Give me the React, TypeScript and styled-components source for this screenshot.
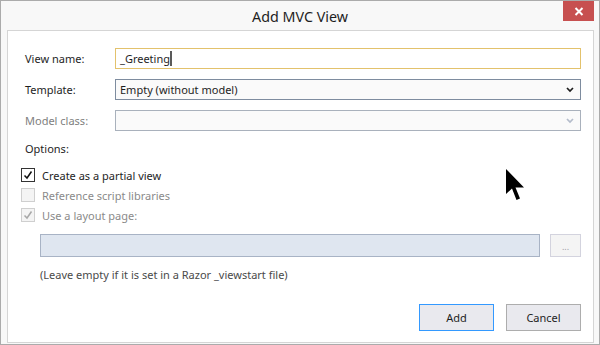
import React from "react";
import styled, { createGlobalStyle } from "styled-components";

const Global = createGlobalStyle`
  html, body { margin: 0; padding: 0; background: #ffffff; }
  * { box-sizing: border-box; }
`;

const FONT = `"Noto Sans", "Open Sans", sans-serif`;

const Window = styled.div`
  width: 600px;
  height: 345px;
  border: 1px solid #ababab;
  background: #f8f8f8;
  display: flex;
  flex-direction: column;
  font-family: ${FONT};
  font-size: 11px;
  color: #1e1e1e;
`;

const TitleBar = styled.div`
  height: 29px;
  display: grid;
  grid-template-columns: 1fr auto 1fr;
  align-items: center;
`;

const Title = styled.div`
  grid-column: 2;
  font-size: 14.3px;
  color: #1e1e1e;
  padding-top: 1px;
`;

const CloseButton = styled.div`
  grid-column: 3;
  justify-self: end;
  align-self: start;
  width: 31px;
  height: 20px;
  margin-right: 5px;
  background: #c75050;
  display: flex;
  align-items: center;
  justify-content: center;
`;

const Panel = styled.div`
  position: relative;
  flex: 1;
  margin: 0 5px 1px 6px;
  border: 1px solid #d5d5d5;
  background: #ffffff;
  padding: 17px 12px 11px 13px;
  display: flex;
  flex-direction: column;
`;

const FormGrid = styled.div`
  display: grid;
  grid-template-columns: 94px 1fr;
  grid-auto-rows: 21px;
  row-gap: 10px;
`;

const Label = styled.div<{ $disabled?: boolean }>`
  display: flex;
  align-items: center;
  padding-left: 4px;
  color: ${(p) => (p.$disabled ? "#808080" : "#1e1e1e")};
`;

const TextBox = styled.div`
  border: 1px solid #e3c26c;
  background: #ffffff;
  display: flex;
  align-items: center;
  padding-left: 4px;
`;

const Caret = styled.span`
  display: inline-block;
  width: 2px;
  height: 15px;
  background: #5a5a5a;
`;

const Select = styled.div<{ $disabled?: boolean }>`
  border: 1px solid ${(p) => (p.$disabled ? "#a9b1bc" : "#7e8c9f")};
  background: #fafafa;
  display: flex;
  align-items: center;
  justify-content: space-between;
  padding: 0 6px 0 4px;
  color: #1e1e1e;
`;

const SectionLabel = styled.div`
  margin-top: 10px;
  padding-left: 4px;
  line-height: 16px;
`;

const CheckList = styled.div`
  margin-top: 8px;
  display: flex;
  flex-direction: column;
`;

const CheckRow = styled.div<{ $disabled?: boolean }>`
  height: 20px;
  display: flex;
  align-items: center;
  gap: 7px;
  color: ${(p) => (p.$disabled ? "#8a8a8a" : "#1e1e1e")};
`;

const Box = styled.div<{ $disabled?: boolean }>`
  width: 14px;
  height: 14px;
  border: 1px solid ${(p) => (p.$disabled ? "#cfcfcf" : "#333333")};
  background: ${(p) => (p.$disabled ? "#f4f4f4" : "#ffffff")};
  display: flex;
  align-items: center;
  justify-content: center;
`;

const LayoutRow = styled.div`
  margin-top: 9px;
  margin-left: 19px;
  height: 23px;
  display: flex;
  gap: 10px;
`;

const LayoutField = styled.div`
  flex: 1;
  border: 1px solid #a8b3c5;
  background: #dfe6f0;
`;

const BrowseButton = styled.div`
  width: 31px;
  border: 1px solid #d3d3de;
  background: #f4f4f4;
  color: #a0a0a8;
  font-size: 9px;
  display: flex;
  align-items: center;
  justify-content: center;
  padding-top: 2px;
`;

const Hint = styled.div`
  margin-top: 10px;
  margin-left: 19px;
  line-height: 16px;
  color: #4a4a4a;
`;

const ButtonRow = styled.div`
  margin-top: auto;
  display: flex;
  justify-content: flex-end;
  gap: 12px;
`;

const Button = styled.div<{ $default?: boolean }>`
  width: 75px;
  height: 27px;
  border: 1px solid ${(p) => (p.$default ? "#3399ff" : "#adadad")};
  background: #e9e9ee;
  display: flex;
  align-items: center;
  justify-content: center;
  color: #1e1e1e;
`;

const Pointer = styled.svg`
  position: absolute;
  left: 498px;
  top: 138px;
`;

const Chevron = ({ color }: { color: string }) => (
  <svg width="8" height="6" viewBox="0 0 8 6">
    <path d="M1 1 L4 4 L7 1" fill="none" stroke={color} strokeWidth="1.7" />
  </svg>
);

const Check = ({ color }: { color: string }) => (
  <svg width="10" height="10" viewBox="0 0 10 10">
    <path d="M1.5 5.5 L4 8 L8.5 1.5" fill="none" stroke={color} strokeWidth="1.5" />
  </svg>
);

export default function App() {
  return (
    <>
      <Global />
      <Window>
        <TitleBar>
          <Title>Add MVC View</Title>
          <CloseButton>
            <svg width="10" height="9" viewBox="0 0 10 9">
              <path d="M1.5 1 L8.5 8 M8.5 1 L1.5 8" stroke="#ffffff" strokeWidth="2" />
            </svg>
          </CloseButton>
        </TitleBar>
        <Panel>
          <FormGrid>
            <Label>View name:</Label>
            <TextBox>
              _Greeting<Caret />
            </TextBox>
            <Label>Template:</Label>
            <Select>
              <span>Empty (without model)</span>
              <Chevron color="#1e1e1e" />
            </Select>
            <Label $disabled>Model class:</Label>
            <Select $disabled>
              <span />
              <Chevron color="#b4bccb" />
            </Select>
          </FormGrid>
          <SectionLabel>Options:</SectionLabel>
          <CheckList>
            <CheckRow>
              <Box>
                <Check color="#111111" />
              </Box>
              Create as a partial view
            </CheckRow>
            <CheckRow $disabled>
              <Box $disabled />
              Reference script libraries
            </CheckRow>
            <CheckRow $disabled>
              <Box $disabled>
                <Check color="#a8a8a8" />
              </Box>
              Use a layout page:
            </CheckRow>
          </CheckList>
          <LayoutRow>
            <LayoutField />
            <BrowseButton>...</BrowseButton>
          </LayoutRow>
          <Hint>(Leave empty if it is set in a Razor _viewstart file)</Hint>
          <ButtonRow>
            <Button $default>Add</Button>
            <Button>Cancel</Button>
          </ButtonRow>
          <Pointer width="19" height="32" viewBox="0 0 19 32">
            <path d="M0 0 L0 25 L6 19.5 L10.5 31 L14 29.5 L9.5 18.5 L18 18.5 Z" fill="#000000" />
          </Pointer>
        </Panel>
      </Window>
    </>
  );
}
